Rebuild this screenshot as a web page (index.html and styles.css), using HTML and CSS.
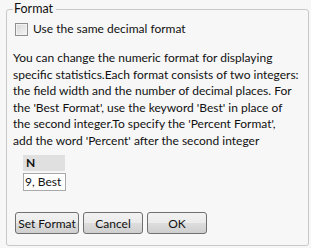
FILE: index.html
```html
<!DOCTYPE html>
<html>
<head>
    <title>Format</title>
    <meta name="viewport" content="width=device-width, initial-scale=1.0">
    <link rel="stylesheet" href="styles.css">
</head>
<body>
    <fieldset class="format-box">
        <legend>Format</legend>
        <label class="check-row">
            <span class="checkbox"></span>
            <span>Use the same decimal format</span>
        </label>
        <p class="help">You can change the numeric format for displaying<br>specific statistics.Each format consists of two integers:<br>the field width and the number of decimal places. For<br>the 'Best Format', use the keyword 'Best' in place of<br>the second integer.To specify the 'Percent Format',<br>add the word 'Percent' after the second integer</p>
        <div class="grid">
            <div class="grid-head">N</div>
            <div class="grid-cell">9, Best</div>
        </div>
        <div class="buttons">
            <button class="btn btn-set">Set Format</button>
            <button class="btn">Cancel</button>
            <button class="btn">OK</button>
        </div>
    </fieldset>
</body>
</html>
```

FILE: styles.css
```css
body {
    margin: 0;
    padding: 1px 2px 0 6px;
    background-color: #f7f7f7;
    font-family: Lato, "Liberation Sans", sans-serif;
    font-size: 12px;
    color: #111;
    overflow: hidden;
}
.format-box {
    margin: 0;
    width: 303px;
    min-width: 0;
    height: 245px;
    box-sizing: border-box;
    border: 1px solid #c8c8c8;
    border-radius: 3px;
    padding: 0 0 0 6px;
    display: flex;
    flex-direction: column;
}
legend {
    padding: 0 3px 0 1px;
    margin-left: 0;
    font-size: 12.5px;
    line-height: 16px;
}
.check-row {
    display: flex;
    align-items: center;
    gap: 5px;
    margin-top: 4px;
    margin-left: 2px;
    line-height: 16px;
}
.checkbox {
    width: 11px;
    height: 11px;
    border: 1px solid #8e8f8f;
    background: linear-gradient(135deg, #d8d8d8, #f4f4f4);
    box-shadow: inset 0 0 0 1px #f2f2f2;
}
.help {
    margin: 13px 0 0 0;
    line-height: 16.5px;
    white-space: nowrap;
}
.grid {
    margin: 6px 0 0 10px;
    width: 42px;
}
.grid-head {
    background-color: #e0e0e0;
    font-weight: bold;
    line-height: 16px;
    padding-left: 3px;
}
.grid-cell {
    margin-top: 2px;
    width: 43px;
    box-sizing: border-box;
    background-color: #fff;
    border: 1px solid #a9a9a9;
    line-height: 16px;
    padding-left: 1px;
}
.buttons {
    display: flex;
    gap: 4px;
    margin-top: 21px;
    margin-left: 2px;
}
.btn {
    width: 60px;
    height: 22px;
    padding: 0;
    font-family: inherit;
    font-size: 12px;
    color: #111;
    border: 1px solid #707070;
    border-radius: 3px;
    background: linear-gradient(#f2f2f2 0%, #ebebeb 50%, #dddddd 51%, #cfcfcf 100%);
}
.btn-set {
    width: 64px;
}
```
